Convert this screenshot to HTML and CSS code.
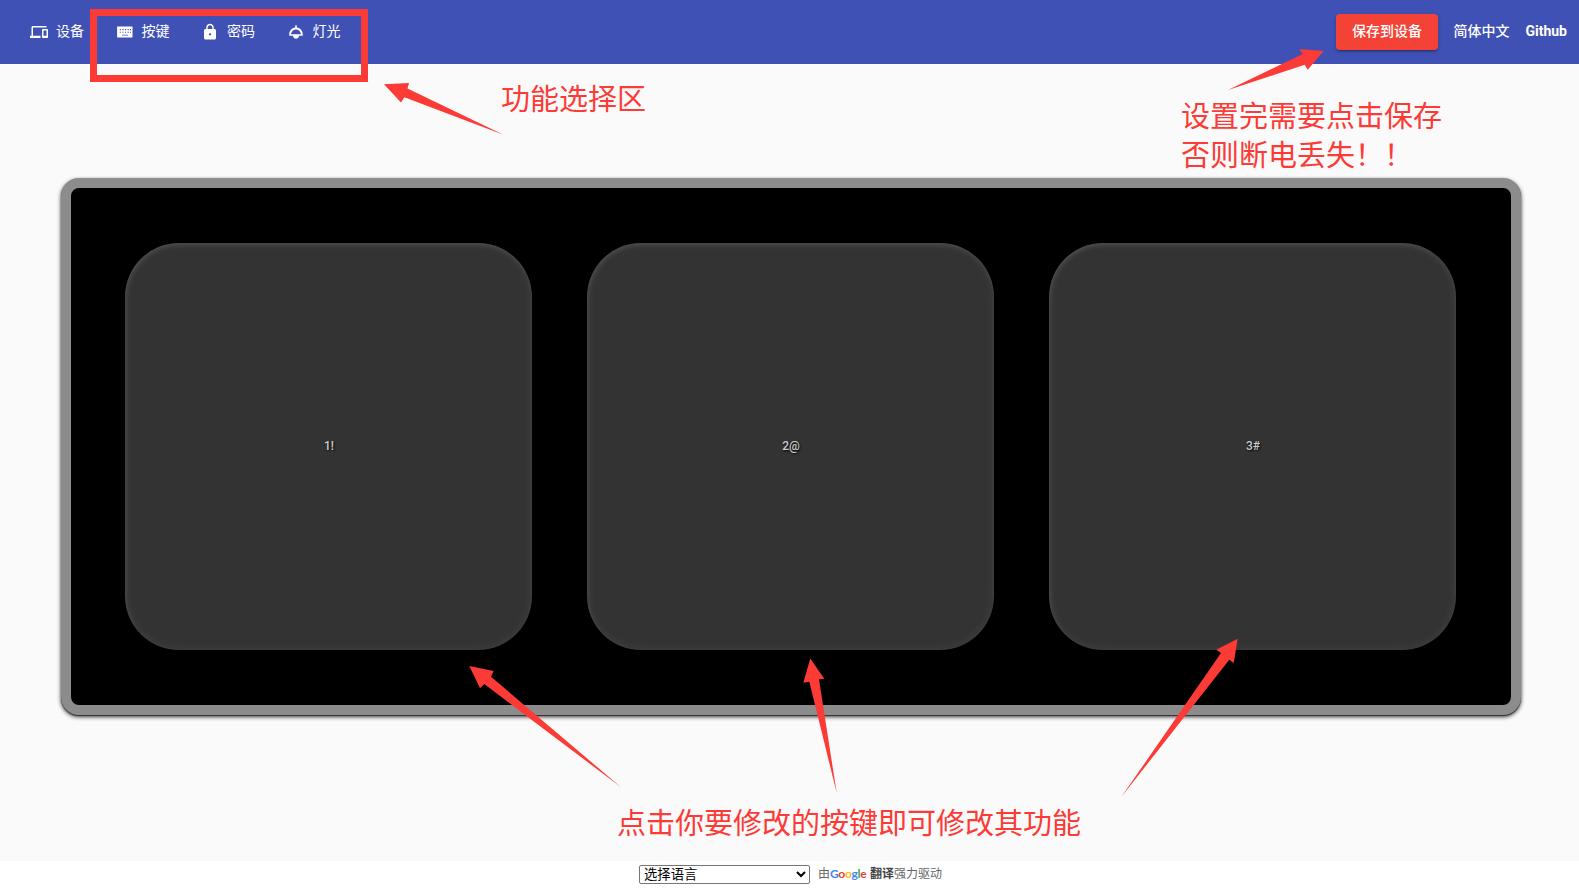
FILE: index.html
```html
<!DOCTYPE html>
<html lang="zh-CN">
<head>
<meta charset="utf-8">
<title>按键</title>
<link rel="stylesheet" href="styles.css">
</head>
<body>
<header class="topbar">
  <nav class="menu">
    <a class="menu-item"><svg class="icon" viewBox="0 0 24 24"><path d="M4 6h18V4H4c-1.100 0-2 .9-2 2v11H0v3h14v-3H4V6zm19 2h-6c-.55 0-1 .45-1 1v10c0 .55.45 1 1 1h6c.55 0 1-.45 1-1V9c0-.55-.45-1-1-1zm-1 9h-4v-7h4v7z"/></svg><span>设备</span></a>
    <a class="menu-item"><svg class="icon" viewBox="0 0 24 24"><path fill-rule="evenodd" d="M1.500 4.700h20.500v14.600H1.500zM5 8v1.500h1.500V8zm3.500 0v1.500H10V8zM12 8v1.500h1.500V8zm3.500 0v1.500H17V8zM5 11.500V13h1.500v-1.500zm3.500 0V13H10v-1.500zm3.500 0V13h1.500v-1.500zm3.500 0V13H17v-1.500zM18.500 8v1.500H20V8zm0 3.500V13H20v-1.500zM8 15.500v1h8v-1z"/></svg><span>按键</span></a>
    <a class="menu-item"><svg class="icon" viewBox="0 0 24 24"><path d="M18 8h-1V6c0-2.760-2.240-5-5-5S7 3.240 7 6v2H6c-1.100 0-2 .9-2 2v10c0 1.100.9 2 2 2h12c1.100 0 2-.9 2-2V10c0-1.100-.9-2-2-2zm-6 8.500c-.9 0-1.500-.7-1.500-1.500s.6-1.500 1.500-1.500 1.500.7 1.500 1.500-.6 1.500-1.500 1.500zm3.100-8.500H8.900V6c0-1.710 1.390-3.100 3.100-3.100s3.100 1.390 3.100 3.100v2z"/></svg><span>密码</span></a>
    <a class="menu-item"><svg class="icon" viewBox="0 0 24 24"><path d="M13 6.060V3h-2v3.060C6.500 6.550 3 10.370 3 15v2h5c0 2.210 1.790 4 4 4s4-1.790 4-4h5v-2c0-4.630-3.500-8.450-8-8.940zM5.500 15c0-3.600 2.900-6.500 6.500-6.500s6.500 2.900 6.500 6.500h-13z"/></svg><span>灯光</span></a>
  </nav>
  <div class="actions">
    <button class="save">保存到设备</button>
    <a class="action-link">简体中文</a>
    <a class="action-link github">Github</a>
  </div>
</header>
<main class="stage">
  <section class="keyboard">
    <div class="key">1!</div>
    <div class="key">2@</div>
    <div class="key">3#</div>
  </section>
</main>
<footer class="footer">
  <select class="language"><option>选择语言</option></select>
  <div class="powered">由<span class="google"><span class="blue">G</span><span class="red">o</span><span class="yellow">o</span><span class="blue">g</span><span class="green">l</span><span class="red">e</span></span><span class="translate">翻译</span>强力驱动</div>
</footer>
<div class="highlight"></div>
<svg class="arrows" viewBox="0 0 1579 888">
  <polygon points="384,84.300 409,83 407.500,88.500 503.500,134.700 404.300,97.300 401,102.500"/>
  <polygon points="1323.700,51 1299.300,49 1302.700,54 1228,90 1304.700,64.700 1307.700,69.700"/>
  <polygon points="469.300,666 493.700,671 491,676.700 621,787.300 484.300,684 480,688.300"/>
  <polygon points="810.300,658.500 824.300,678.700 819,679.300 836.700,793 809.300,681.700 803.300,682.700"/>
  <polygon points="1237.700,638.700 1233.700,663 1229.300,659.700 1121.300,797 1221,653 1216.300,649.700"/>
</svg>
<p class="note note-menu">功能选择区</p>
<p class="note note-save">设置完需要点击保存<br>否则断电丢失！！</p>
<p class="note note-keys">点击你要修改的按键即可修改其功能</p>
</body>
</html>
```
FILE: styles.css
```css
* { box-sizing: border-box; }
body {
  position: relative;
  display: flex;
  flex-direction: column;
  width: 1579px;
  height: 888px;
  margin: 0;
  overflow: hidden;
  background: #fff;
  font-family: Roboto, "Noto Sans CJK SC", sans-serif;
}
.topbar {
  display: flex;
  justify-content: space-between;
  height: 64px;
  padding: 14px 12px 0 30px;
  background: #3f51b5;
  color: #fff;
  font-size: 14px;
  font-weight: 400;
}
.menu { display: flex; gap: 31.500px; height: 36px; }
.menu-item { display: flex; align-items: center; gap: 8px; line-height: 36px; }
.menu-item span { position: relative; top: -1px; }
.icon { width: 18px; height: 18px; fill: #fff; }
.actions { display: flex; gap: 16px; height: 36px; line-height: 34px; }
.save {
  width: 102px;
  height: 36px;
  margin-right: -.5px;
  padding: 0 0 2px;
  border: 0;
  border-radius: 4px;
  background: #f44336;
  color: #fff;
  font: inherit;
  font-weight: 500;
  box-shadow: 0 3px 1px -2px rgba(0,0,0,.2), 0 2px 2px rgba(0,0,0,.14), 0 1px 5px rgba(0,0,0,.12);
}
.action-link { font-weight: 500; }
.github { font-weight: 700; }
.stage {
  height: 797px;
  padding: 114px 57px 0 61px;
  background: #fafafa;
}
.keyboard {
  display: flex;
  gap: 55px;
  width: 1460px;
  height: 537px;
  padding: 55px 54px;
  border: 10px solid #8c8c8c;
  border-radius: 18px;
  background: #000;
  box-shadow: 0 1px 1px #333, 0 2px 4px rgba(0,0,0,.75);
}
.key {
  display: flex;
  align-items: center;
  justify-content: center;
  width: 407px;
  height: 407px;
  padding: 0 0 2px 1px;
  border-radius: 54px;
  background: #333;
  box-shadow: inset 1px 2px 4px rgba(255,255,255,.1), inset 0 0 12px rgba(255,255,255,.07);
  color: #ccc;
  font-size: 12px;
  font-weight: 500;
  text-shadow: 1px 1px 2px #000;
}
.footer { display: flex; gap: 8px; height: 27px; padding: 4px 0 0 639px; }
.language {
  width: 171px;
  height: 19px;
  padding: 0;
  border: 1px solid #767676;
  border-radius: 2px;
  background: #fff;
  color: #000;
  font-family: "Liberation Sans", "Noto Sans CJK SC", sans-serif;
  font-size: 13.333px;
}
.powered { height: 19px; color: #666; font-size: 12px; line-height: 19px; white-space: nowrap; }
.google {
  display: inline-block;
  width: 40px;
  font-family: Lato, sans-serif;
  font-size: 12px;
  font-weight: 700;
  letter-spacing: -.3px;
  line-height: 17px;
}
.translate { color: #444; font-weight: 700; }
.blue { color: #4285f4; }
.red { color: #ea4335; }
.yellow { color: #fbbc05; }
.green { color: #34a853; }
.highlight {
  position: absolute;
  left: 90px;
  top: 9px;
  width: 278px;
  height: 73px;
  border: 7px solid #fc3a36;
}
.arrows { position: absolute; left: 0; top: 0; width: 1579px; height: 888px; fill: #fc3a36; pointer-events: none; }
.note {
  position: absolute;
  margin: 0;
  color: #fc3a36;
  font-family: "Noto Sans CJK SC", sans-serif;
  font-size: 29px;
  font-weight: 400;
  line-height: 39px;
  white-space: nowrap;
}
.note-menu { left: 501px; top: 78px; }
.note-save { left: 1181px; top: 95px; }
.note-keys { left: 617px; top: 802px; }
```
